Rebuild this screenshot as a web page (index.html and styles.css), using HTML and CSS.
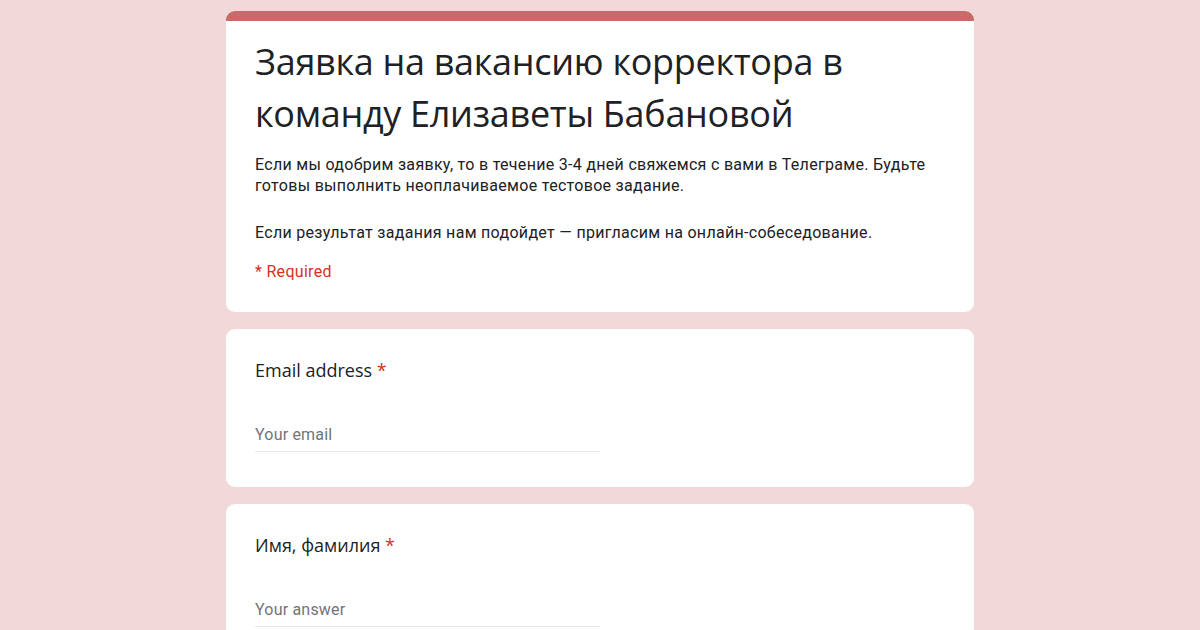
FILE: index.html
```html
<!DOCTYPE html>
<html lang="ru">
<head>
  <meta charset="UTF-8" />
  <meta name="viewport" content="width=device-width, initial-scale=1.0"/>
  <title>Заявка на вакансию корректора</title>
  <link rel="stylesheet" href="styles.css">
</head>
<body>
  <main class="form">
    <section class="card card-head">
      <h1>Заявка на вакансию корректора в команду Елизаветы Бабановой</h1>
      <p class="desc">Если мы одобрим заявку, то в течение 3-4 дней свяжемся с вами в Телеграме. Будьте готовы выполнить неоплачиваемое тестовое задание.</p>
      <p class="desc">Если результат задания нам подойдет — пригласим на онлайн-собеседование.</p>
      <p class="req">* Required</p>
    </section>

    <section class="card question">
      <label class="q-title">Email address <span class="star">*</span></label>
      <input class="answer" type="email" placeholder="Your email" />
    </section>

    <section class="card question">
      <label class="q-title">Имя, фамилия <span class="star">*</span></label>
      <input class="answer" type="text" placeholder="Your answer" />
    </section>
  </main>
</body>
</html>
```

FILE: styles.css
```css
body { margin: 0; background: #f2d9d9; font-family: Roboto, "Noto Sans", sans-serif; color: #202124; }
.form { width: 748px; margin: 0 auto; padding-top: 11px; display: flex; flex-direction: column; gap: 17px; }
.card { background: #fff; border-radius: 9px; padding: 0 29px; }
.card-head { border-top: 10px solid #c96a6a; padding-top: 15px; padding-bottom: 30px; }
h1 { font-family: "Open Sans", sans-serif; font-weight: 400; font-size: 36px; line-height: 52px; margin: 0 0 14px; letter-spacing: -0.3px; }
.desc { font-size: 16px; line-height: 21px; letter-spacing: 0.3px; margin: 0 0 26px; }
.req { color: #d93025; font-size: 16px; letter-spacing: 0.3px; margin: -8px 0 0; line-height: 21px; }
.question { padding-top: 28px; padding-bottom: 35px; display: flex; flex-direction: column; }
.q-title { font-family: "Open Sans", sans-serif; font-size: 18px; line-height: 26px; margin-bottom: 40px; }
.star { color: #d93025; }
.answer { width: 345px; border: none; border-bottom: 1px solid #e8e8ea; padding: 0 0 4px; font-family: Roboto, sans-serif; font-size: 16px; line-height: 24px; letter-spacing: 0.2px; outline: none; }
.answer::placeholder { color: #70757a; }
```
